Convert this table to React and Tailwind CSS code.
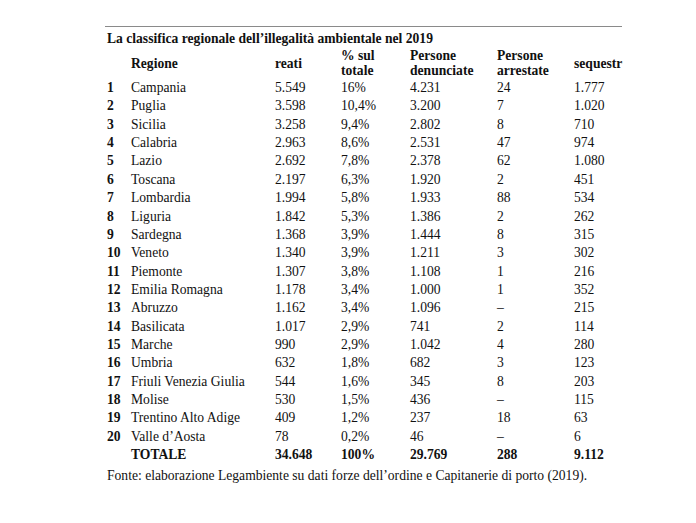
import React from "react";

const rows = [
  ["1", "Campania", "5.549", "16%", "4.231", "24", "1.777"],
  ["2", "Puglia", "3.598", "10,4%", "3.200", "7", "1.020"],
  ["3", "Sicilia", "3.258", "9,4%", "2.802", "8", "710"],
  ["4", "Calabria", "2.963", "8,6%", "2.531", "47", "974"],
  ["5", "Lazio", "2.692", "7,8%", "2.378", "62", "1.080"],
  ["6", "Toscana", "2.197", "6,3%", "1.920", "2", "451"],
  ["7", "Lombardia", "1.994", "5,8%", "1.933", "88", "534"],
  ["8", "Liguria", "1.842", "5,3%", "1.386", "2", "262"],
  ["9", "Sardegna", "1.368", "3,9%", "1.444", "8", "315"],
  ["10", "Veneto", "1.340", "3,9%", "1.211", "3", "302"],
  ["11", "Piemonte", "1.307", "3,8%", "1.108", "1", "216"],
  ["12", "Emilia Romagna", "1.178", "3,4%", "1.000", "1", "352"],
  ["13", "Abruzzo", "1.162", "3,4%", "1.096", "–", "215"],
  ["14", "Basilicata", "1.017", "2,9%", "741", "2", "114"],
  ["15", "Marche", "990", "2,9%", "1.042", "4", "280"],
  ["16", "Umbria", "632", "1,8%", "682", "3", "123"],
  ["17", "Friuli Venezia Giulia", "544", "1,6%", "345", "8", "203"],
  ["18", "Molise", "530", "1,5%", "436", "–", "115"],
  ["19", "Trentino Alto Adige", "409", "1,2%", "237", "18", "63"],
  ["20", "Valle d’Aosta", "78", "0,2%", "46", "–", "6"],
];

const cols = "grid grid-cols-[24px_144px_66px_69px_87px_77px_56px]";

export default function App() {
  return (
    <div
      className="w-[696px] h-[523px] bg-white text-[#111] text-[13.6px] overflow-hidden"
      style={{ fontFamily: '"Liberation Serif", "Times New Roman", serif' }}
    >
      <div className="pt-[26px] pl-[105px]">
        <div className="w-[517px] border-t border-[#8a8a8a]" />
        <div className="pl-[2px] pt-[4px]">
          <div className="font-bold leading-[16px] whitespace-nowrap">
            La classifica regionale dell’illegalità ambientale nel 2019
          </div>
          <div className={`${cols} font-bold leading-[15px] h-[32px] items-end pb-[1px]`}>
            <div />
            <div className="self-center pt-[1px]">Regione</div>
            <div className="self-center pt-[1px]">reati</div>
            <div>
              % sul
              <br />
              totale
            </div>
            <div>
              Persone
              <br />
              denunciate
            </div>
            <div>
              Persone
              <br />
              arrestate
            </div>
            <div className="self-center pt-[1px] whitespace-nowrap">sequestr</div>
          </div>
          {rows.map((r) => (
            <div key={r[0]} className={`${cols} h-[18.37px] leading-[18.37px]`}>
              <div className="font-bold">{r[0]}</div>
              <div className="whitespace-nowrap">{r[1]}</div>
              <div>{r[2]}</div>
              <div>{r[3]}</div>
              <div>{r[4]}</div>
              <div>{r[5]}</div>
              <div>{r[6]}</div>
            </div>
          ))}
          <div className={`${cols} h-[18.37px] leading-[18.37px] font-bold`}>
            <div />
            <div>TOTALE</div>
            <div>34.648</div>
            <div>100%</div>
            <div>29.769</div>
            <div>288</div>
            <div>9.112</div>
          </div>
          <div className="leading-[22px] whitespace-nowrap">
            Fonte: elaborazione Legambiente su dati forze dell’ordine e Capitanerie di porto (2019).
          </div>
        </div>
      </div>
    </div>
  );
}
